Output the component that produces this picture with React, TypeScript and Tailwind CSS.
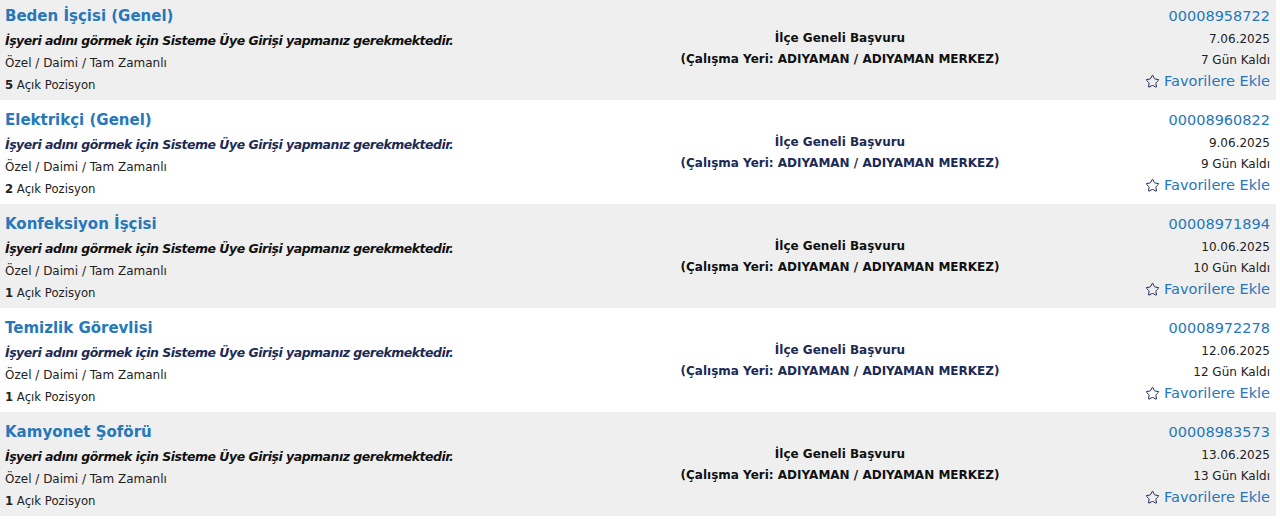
import { Star } from 'lucide-react';

// İş ilanları listesi
const JOBS = [
  { title: 'Beden İşçisi (Genel)', no: '00008958722', date: '7.06.2025', left: '7 Gün Kaldı', open: 5 },
  { title: 'Elektrikçi (Genel)', no: '00008960822', date: '9.06.2025', left: '9 Gün Kaldı', open: 2 },
  { title: 'Konfeksiyon İşçisi', no: '00008971894', date: '10.06.2025', left: '10 Gün Kaldı', open: 1 },
  { title: 'Temizlik Görevlisi', no: '00008972278', date: '12.06.2025', left: '12 Gün Kaldı', open: 1 },
  { title: 'Kamyonet Şoförü', no: '00008983573', date: '13.06.2025', left: '13 Gün Kaldı', open: 1 },
];

export default function App() {
  return (
    <div className="w-[1280px] h-[519px] overflow-hidden bg-white" style={{ fontFamily: '"DejaVu Sans", Verdana, sans-serif' }}>
      <div className="mt-[-4px] w-[1276px]">
        {JOBS.map((job, i) => {
          const gray = i % 2 === 0;
          const ink = gray ? 'text-[#111111]' : 'text-[#1c2a55]';
          return (
            <div key={job.no} className={`flex h-[104px] px-[5px] ${gray ? 'bg-[#efefef]' : 'bg-white'}`}>
              <div className="w-[555px] pt-[9px]">
                <h3 className="text-[15px] leading-[22px] font-bold text-[#2677bb]">{job.title}</h3>
                <p className={`mt-[3px] text-[12.5px] tracking-[-0.5px] leading-[22px] font-bold italic whitespace-nowrap ${ink}`}>
                  İşyeri adını görmek için Sisteme Üye Girişi yapmanız gerekmektedir.
                </p>
                <p className="text-[12px] leading-[22px] text-[#222]">Özel / Daimi / Tam Zamanlı</p>
                <p className="text-[11.7px] leading-[22px] text-[#222]">
                  <span className="font-bold">{job.open}</span> Açık Pozisyon
                </p>
              </div>
              <div className={`w-[560px] pt-[32px] text-center text-[12px] leading-[21px] font-bold ${ink}`}>
                <p>İlçe Geneli Başvuru</p>
                <p>(Çalışma Yeri: ADIYAMAN / ADIYAMAN MERKEZ)</p>
              </div>
              <div className="flex-1 pt-[9px] pr-[1px] flex flex-col items-end">
                <a className="text-[14.5px] leading-[22px] text-[#2677bb]">{job.no}</a>
                <p className="mt-[2px] text-[12px] leading-[21px] text-[#222]">{job.date}</p>
                <p className="text-[12px] leading-[21px] text-[#222]">{job.left}</p>
                <a className="-mt-[1px] flex items-center gap-[4px] text-[14.5px] leading-[22px] text-[#2677bb] whitespace-nowrap">
                  <Star size={15} strokeWidth={1.6} className="text-[#1c2a55]" />
                  Favorilere Ekle
                </a>
              </div>
            </div>
          );
        })}
      </div>
    </div>
  );
}
